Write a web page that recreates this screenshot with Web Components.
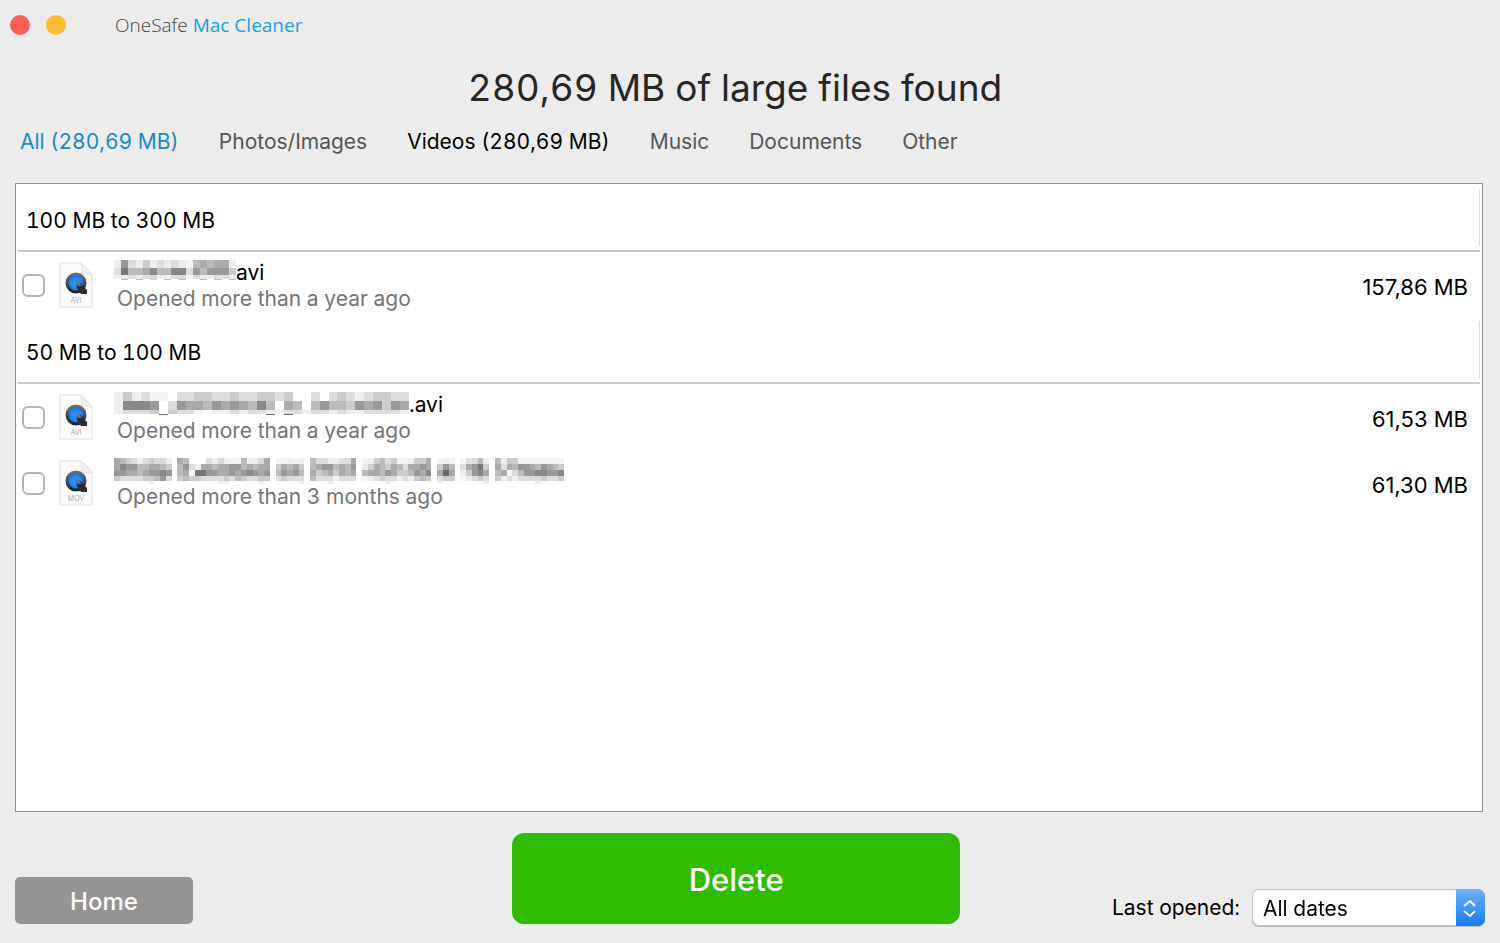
<!DOCTYPE html>
<html lang="en">
<head>
<meta charset="utf-8">
<meta name="viewport" content="width=device-width, initial-scale=1">
<title>OneSafe Mac Cleaner</title>
<style>
  body { margin: 0; background: #ececec; color: #000; font: 21px/26px Inter, "Liberation Sans", sans-serif; font-variant-numeric: tabular-nums; }
</style>
</head>
<body>
<cleaner-window>
  <title-bar slot="bar"></title-bar>
  <span slot="heading">280,69 MB of large files found</span>
  <category-tabs slot="tabs">
    <category-tab state="current">All (280,69 MB)</category-tab>
    <category-tab>Photos/Images</category-tab>
    <category-tab state="filled">Videos (280,69 MB)</category-tab>
    <category-tab>Music</category-tab>
    <category-tab>Documents</category-tab>
    <category-tab>Other</category-tab>
  </category-tabs>
  <file-group label="100 MB to 300 MB">
    <file-row kind="AVI" size="157,86 MB" opened="Opened more than a year ago"><masked-name slot="name" pattern="short"></masked-name>avi</file-row>
  </file-group>
  <file-group label="50 MB to 100 MB">
    <file-row kind="AVI" size="61,53 MB" opened="Opened more than a year ago"><masked-name slot="name" pattern="medium"></masked-name>.avi</file-row>
    <file-row kind="MOV" size="61,30 MB" opened="Opened more than 3 months ago"><masked-name slot="name" pattern="long"></masked-name></file-row>
  </file-group>
  <action-button slot="home" kind="home">Home</action-button>
  <action-button slot="delete" kind="delete">Delete</action-button>
  <date-filter slot="filter"></date-filter>
</cleaner-window>

<script>
class Base extends HTMLElement {
  connectedCallback() {
    if (this.shadowRoot) return;
    this.attachShadow({ mode: "open" }).innerHTML = this.render();
  }
}

customElements.define("cleaner-window", class extends Base {
  render() {
    return `<style>
      :host { display: flex; flex-direction: column; min-height: 100vh; box-sizing: border-box; padding: 0 15px 17px; }
      h1 { margin: 14px 30px 0 0; font-size: 37px; line-height: 50px; font-weight: 400; color: #262626; text-align: center; }
      main { flex: 1; box-sizing: border-box; margin: 28px 2px 21px 0; padding: 5px 2px; background: #fff; border: 1px solid #8e8e8e; }
      footer { display: grid; grid-template-columns: 18fr 448px 19fr; align-items: end; }
    </style>
    <slot name="bar"></slot>
    <h1><slot name="heading"></slot></h1>
    <slot name="tabs"></slot>
    <main id="files"><slot></slot></main>
    <footer><slot name="home"></slot><slot name="delete"></slot><slot name="filter"></slot></footer>`;
  }
});

customElements.define("title-bar", class extends Base {
  render() {
    return `<style>
      :host { display: block; }
      header { display: flex; align-items: center; height: 49px; margin-left: -5px; font: 19px/28px "Open Sans", "Noto Sans", sans-serif; }
      button { width: 20px; height: 20px; padding: 0; margin: 0 16px 0 0; border: 0; border-radius: 50%; }
      .close { background: #ff5f57; }
      .min { background: #fcbe2c; }
      p { margin: 0 0 0 33px; color: #444; font-weight: 300; }
      span { color: #0ea2ee; font-weight: 400; }
    </style>
    <header><button class="close" aria-label="Close"></button><button class="min" aria-label="Minimise"></button>
    <p>OneSafe <span>Mac Cleaner</span></p></header>`;
  }
});

customElements.define("category-tabs", class extends Base {
  render() {
    return `<style>
      :host { display: block; margin-top: 16px; padding-left: 5px; }
      nav { display: flex; gap: 40px; }
    </style><nav aria-label="File types"><slot></slot></nav>`;
  }
});

customElements.define("category-tab", class extends Base {
  render() {
    return `<style>
      :host { display: block; }
      a { color: #555; text-decoration: none; white-space: nowrap; }
      :host([state="current"]) a { color: #168ac8; }
      :host([state="filled"]) a { color: #000; }
    </style><a href="#files"><slot></slot></a>`;
  }
});

customElements.define("file-group", class extends Base {
  render() {
    return `<style>
      :host { display: block; }
      h2 { margin: 0; padding: 19px 8px 12px; font-size: 21px; line-height: 26px; font-weight: 400; border-right: 1px solid #ddd; }
      .rows { border-top: 2px solid #ccc; margin-top: 4px; padding-bottom: 3px; }
    </style><section><h2>${this.getAttribute("label")}</h2><div class="rows"><slot></slot></div></section>`;
  }
});

customElements.define("file-row", class extends Base {
  render() {
    const kind = this.getAttribute("kind");
    return `<style>
      :host { display: block; }
      label { display: flex; align-items: center; height: 66px; padding: 0 12px 0 4px; box-sizing: border-box; }
      input { appearance: none; width: 23px; height: 23px; margin: 0 13px 0 0; box-sizing: border-box; border: 2px solid #b5b5b5; border-radius: 6px; background: #fff; }
      input:checked { background: #2f8cf5; }
      svg { display: block; width: 36px; height: 48px; margin-right: 23px; }
      svg text { font: 7px Inter, sans-serif; fill: #aaa; }
      .text { flex: 1; padding-top: 2px; }
      .name { display: flex; }
      .opened { display: block; color: #757575; }
      .size { padding-top: 3px; font-size: 22px; font-variant-numeric: normal; }
    </style>
    <label>
      <input type="checkbox">
      <svg viewBox="0 0 36 48" aria-hidden="true">
        <defs>
          <radialGradient id="q"><stop offset="0" stop-color="#35a5ff"/><stop offset="1" stop-color="#0b6df0"/></radialGradient>
          <linearGradient id="r" x2="0" y2="1"><stop offset="0" stop-color="#6a7078"/><stop offset="1" stop-color="#202226"/></linearGradient>
        </defs>
        <path d="M2 2H23L34 14V46H2Z" fill="#fcfcfc" stroke="#eee" stroke-width="2"/>
        <path d="M23 2L24 13L34 14Z" fill="#f0f0f0" stroke="#e6e6e6"/>
        <circle cx="18" cy="22" r="9" fill="url(#q)" stroke="url(#r)" stroke-width="3"/>
        <path d="M18 21L23 22L27 27L29 29V33H23L19 27Z" fill="#2b2d30"/>
        <path d="M15 19L21 21L24 25L20 25Z" fill="#5d7792"/>
        <text x="18" y="42" text-anchor="middle">${kind}</text>
      </svg>
      <span class="text"><span class="name"><slot name="name"></slot><slot></slot></span><span class="opened">${this.getAttribute("opened")}</span></span>
      <span class="size">${this.getAttribute("size")}</span>
    </label>`;
  }
});

/* Each pattern is a mosaic of grey levels, one hex digit per cell; spaces are empty cells. */
const MASKS = {
  short: { width: 122, heights: [8, 7, 4, 1], rows: [
    "e9decededefbabaae",
    "d7bba8bb88d9b999c",
    "eededdeeddfdeedde",
    " b b c b b  b b b"] },
  medium: { width: 295, heights: [9, 9, 4, 1], rows: [
    "ecedff ddccddcddccdc  d dcdedccdd",
    "e8889 d9aab9a9ab8b ab b9bbc9a9c9a",
    "edddc cddf eededdeeddeddedeedddde",
    "     6           6 6             "] },
  long: { width: 456, heights: [6, 6, 6, 5, 3], rows: [
    "abcdedcdde " + "ab   dedeffbeeda " + "ffefe " + "bddeedda " + "fecbdcffecca " + "fef " + "fddbe " + "beccffffffff ",
    "a899bbaabc " + "b9deaabaa99babaa " + "cabac " + "ba99bab9 " + "ecabcabdaa9a " + "c9b " + "da97c " + "adab99ab9abc ",
    "99aaba9989 " + "baf7799aa9a989a9 " + "b9a9b " + "acbacaba " + "baab9accb9a8 " + "a6a " + "ec98a " + "bafdb9988998 ",
    "cddddccb9d " + "cbccddddcdbcddcc " + "dcddd " + "bdddeddd " + "fedcddedecbc " + "dcc " + "fedcd " + "cededdddcddc ",
    "      e           ee     e      e    e         e        e       e        e     "] }
};

customElements.define("masked-name", class extends Base {
  render() {
    const m = MASKS[this.getAttribute("pattern")];
    const cols = Math.min(...m.rows.map(r => r.length));
    const total = m.heights.reduce((a, b) => a + b, 0);
    let y = 0, cells = "";
    m.rows.forEach((row, i) => {
      for (let c = 0; c < cols; c++) {
        const v = row[c];
        if (v !== " ") cells += `<rect x="${c}" y="${y}" width="1" height="${m.heights[i]}" fill="${v === "f" ? "#f4f4f4" : "#" + v + v + v}"/>`;
      }
      y += m.heights[i];
    });
    return `<style>
      :host { display: block; margin-left: -3px; }
      svg { display: block; width: ${m.width}px; height: ${total}px; }
    </style><svg role="img" aria-label="Hidden file name" viewBox="0 0 ${cols} ${total}" preserveAspectRatio="none" shape-rendering="crispEdges">${cells}</svg>`;
  }
});

customElements.define("action-button", class extends Base {
  render() {
    return `<style>
      :host { display: block; margin-bottom: 2px; }
      button { display: block; width: 178px; height: 47px; padding: 3px 0 0; border: 0; border-radius: 5px; background: #949494; color: #fff; font: 500 24px/30px Inter, "Liberation Sans", sans-serif; }
      :host([kind="delete"]) button { width: 100%; height: 91px; border-radius: 12px; background: #2fbd00; font-size: 31px; line-height: 40px; }
    </style><button type="button"><slot></slot></button>`;
  }
});

customElements.define("date-filter", class extends Base {
  render() {
    return `<style>
      :host { display: flex; justify-content: flex-end; align-items: center; gap: 12px; }
      .box { display: grid; width: 233px; height: 37px; filter: drop-shadow(0 1px 0 #bbb); }
      select { grid-area: 1 / 1; appearance: none; width: 100%; height: 100%; box-sizing: border-box; margin: 0; padding: 2px 40px 0 10px; border: 1px solid #c4c4c4; border-radius: 7px; background: #fff; color: #000; font: inherit; }
      .step { grid-area: 1 / 1; justify-self: end; width: 29px; height: 37px; border-radius: 0 7px 7px 0; background: linear-gradient(#6cb3fa, #3f97fb 50%, #147cfc); pointer-events: none; }
    </style>
    <label for="dates">Last opened:</label>
    <div class="box"><select id="dates"><option>All dates</option></select>
      <svg class="step" viewBox="0 0 29 37" aria-hidden="true"><path d="M8 17L14 12L19 17M8 22L14 27L19 22" fill="none" stroke="#fff" stroke-width="2"/></svg>
    </div>`;
  }
});
</script>
</body>
</html>
